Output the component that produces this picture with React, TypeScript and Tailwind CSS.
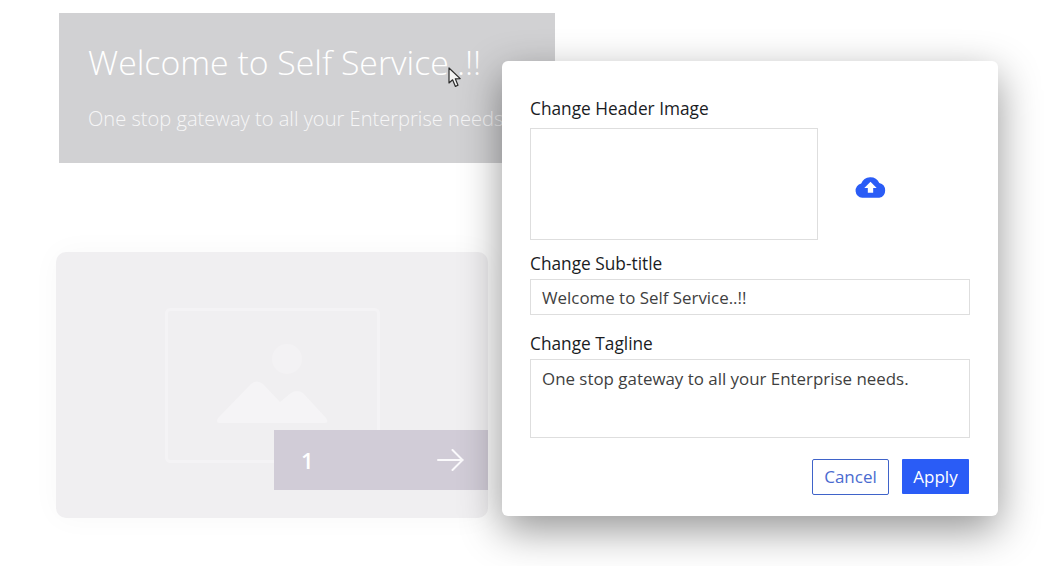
import React from "react";

const font = { fontFamily: '"Open Sans", "Noto Sans", sans-serif' };

function PlaceholderImage() {
  return (
    <svg className="ml-px" width="216" height="155" viewBox="0 0 216 155" fill="none">
      <rect x="1.5" y="1.5" width="212" height="152" rx="4" stroke="#f4f3f5" strokeWidth="3" />
      <circle cx="122" cy="51" r="15" fill="#f3f2f4" />
      <path
        d="M52 113 Q52 111 54 109 L86 76 Q92 71 98 76 L115 94 L126 85 Q132 81 138 85 L161 110 Q164 115 160 115 L54 115 Q52 115 52 113 Z"
        fill="#f5f4f6"
      />
    </svg>
  );
}

function UploadCloud() {
  return (
    <svg width="31" height="22" viewBox="0 0 30 21">
      <path
        d="M7 21 A7 7 0 0 1 6 7.2 A9.5 9.5 0 0 1 23.5 6.6 A7.4 7.4 0 0 1 23.5 21 Z"
        fill="#2a5cf6"
      />
      <path d="M15 5.5 L21 11.5 L17.6 11.5 L17.6 16 L12.4 16 L12.4 11.5 L9 11.5 Z" fill="#ffffff" />
    </svg>
  );
}

function Cursor() {
  return (
    <svg className="absolute left-[448px] top-[67px]" width="14" height="21" viewBox="0 0 14 21">
      <path
        d="M1 1 L1 16 L4.6 12.8 L7.4 19.4 L10 18.2 L7.3 11.8 L12.2 11.6 Z"
        fill="#f4f4f4"
        stroke="#2b2b2b"
        strokeWidth="1.2"
        strokeLinejoin="round"
      />
    </svg>
  );
}

export default function App() {
  return (
    <div className="relative h-[566px] w-[1045px] overflow-hidden bg-white" style={font}>
      <div className="pl-[56px] pt-[13px]">
        <div className="ml-[3px] h-[150px] w-[496px] bg-[#d1d1d3] pl-[29px] pt-[24px] text-white">
          <h1 className="text-[33.8px] font-light leading-[50px] whitespace-nowrap">Welcome to Self Service..!!</h1>
          <p className="mt-[17px] text-[20.1px] font-light leading-[30px] whitespace-nowrap text-[#f6f6f7]">
            One stop gateway to all your Enterprise needs.
          </p>
        </div>

        <div className="relative mt-[89px] flex h-[266px] w-[432px] items-center justify-center rounded-[10px] bg-[#f0eff1] shadow-[0_0_30px_rgba(0,0,0,0.03)]">
          <PlaceholderImage />
          <div className="absolute bottom-[28px] right-0 flex h-[60px] w-[214px] items-center justify-between bg-[#d1ccd7] pl-[27px] pr-[24px] text-white">
            <span className="text-[22px] font-semibold">1</span>
            <svg width="27" height="22" viewBox="0 0 27 22" fill="none" stroke="#fbfafc" strokeWidth="2" strokeLinecap="round" strokeLinejoin="round">
              <path d="M1 11 H25.5" />
              <path d="M15.5 1 L25.5 11 L15.5 21" />
            </svg>
          </div>
        </div>
      </div>

      <Cursor />

      <div className="absolute left-[502px] top-[61px] h-[455px] w-[496px] rounded-[6px] bg-white px-[28px] pt-[35px] text-[#1a1c1f] shadow-[0_14px_42px_rgba(0,0,0,0.42)]">
        <div className="text-[17.3px] font-medium leading-[26px]">Change Header Image</div>
        <div className="mt-[6px] flex items-center">
          <div className="h-[112px] w-[288px] border border-[#dedede]" />
          <div className="ml-[37px] mt-[6px]">
            <UploadCloud />
          </div>
        </div>

        <div className="mt-[11px] text-[17.3px] font-medium leading-[26px]">Change Sub-title</div>
        <div className="mt-[2px] flex h-[36px] items-center border border-[#dedede] pl-[11px] pt-px text-[16.9px] text-[#3f3f3f]">
          Welcome to Self Service..!!
        </div>

        <div className="mt-[16px] text-[17.3px] font-medium leading-[26px]">Change Tagline</div>
        <div className="mt-[2px] h-[79px] border border-[#dedede] pl-[11px] pt-[6px] text-[16.9px] leading-[26px] text-[#3f3f3f]">
          One stop gateway to all your Enterprise needs.
        </div>

        <div className="mt-[21px] flex justify-end gap-[13px] pr-px">
          <button className="h-[36px] w-[77px] rounded-[2px] border border-[#3f63c9] text-[17px] text-[#4a6bd0]">Cancel</button>
          <button className="h-[35px] w-[67px] rounded-[1px] bg-[#2a5cf6] text-[17px] text-white">Apply</button>
        </div>
      </div>
    </div>
  );
}
